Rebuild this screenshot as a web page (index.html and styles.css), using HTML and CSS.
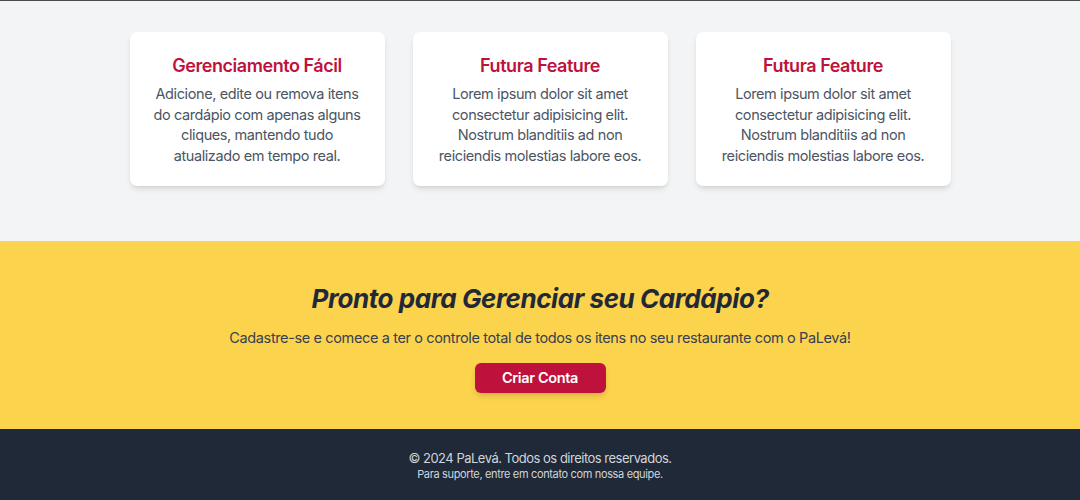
FILE: index.html
```html
<!DOCTYPE html>
<html lang="pt-BR">
<head>
<meta charset="utf-8">
<title>PaLevá</title>
<link rel="stylesheet" href="styles.css">
</head>
<body>
<section class="features">
  <div class="cards">
    <div class="card">
      <h3 class="card-title">Gerenciamento Fácil</h3>
      <p class="card-text">Adicione, edite ou remova itens do cardápio com apenas alguns cliques, mantendo tudo atualizado em tempo real.</p>
    </div>
    <div class="card">
      <h3 class="card-title">Futura Feature</h3>
      <p class="card-text">Lorem ipsum dolor sit amet consectetur adipisicing elit. Nostrum blanditiis ad non reiciendis molestias labore eos.</p>
    </div>
    <div class="card">
      <h3 class="card-title">Futura Feature</h3>
      <p class="card-text">Lorem ipsum dolor sit amet consectetur adipisicing elit. Nostrum blanditiis ad non reiciendis molestias labore eos.</p>
    </div>
  </div>
</section>
<section class="cta">
  <h2 class="cta-title">Pronto para Gerenciar seu Cardápio?</h2>
  <p class="cta-text">Cadastre-se e comece a ter o controle total de todos os itens no seu restaurante com o PaLevá!</p>
  <a class="cta-button" href="#">Criar Conta</a>
</section>
<footer class="footer">
  <p class="footer-main">© 2024 PaLevá. Todos os direitos reservados.</p>
  <p class="footer-sub">Para suporte, entre em contato com nossa equipe.</p>
</footer>
</body>
</html>
```
FILE: styles.css
```css
* { box-sizing: border-box; }
html, body { margin: 0; padding: 0; }
body {
  font-family: Inter, "Liberation Sans", sans-serif;
  background: #f3f4f6;
  border-top: 1px solid #4b4b4b;
}
.features {
  padding: 31px 0 55px;
}
.cards {
  display: flex;
  justify-content: center;
  gap: 28px;
}
.card {
  width: 255px;
  height: 154px;
  background: #fff;
  border-radius: 7px;
  box-shadow: 0 4px 6px -1px rgba(0,0,0,0.1), 0 2px 4px -2px rgba(0,0,0,0.1);
  padding: 22px 23px;
  text-align: center;
}
.card-title {
  margin: 0 0 6px;
  font-size: 18px;
  line-height: 24px;
  font-weight: 600;
  letter-spacing: -0.45px;
  color: #be123c;
}
.card-text {
  margin: 0;
  font-size: 14.5px;
  line-height: 20.6px;
  letter-spacing: -0.4px;
  color: #4b5563;
}
.cta {
  background: #fcd34d;
  text-align: center;
  padding: 41px 0 36px;
}
.cta-title {
  margin: 0;
  font-size: 26px;
  line-height: 34px;
  font-style: italic;
  font-weight: 700;
  letter-spacing: -0.43px;
  color: #1f2937;
}
.cta-text {
  margin: 12px 0 15px;
  font-size: 14.5px;
  line-height: 20px;
  letter-spacing: -0.37px;
  color: #374151;
}
.cta-button {
  display: inline-block;
  width: 131px;
  height: 30px;
  line-height: 30px;
  background: #be123c;
  color: #fff;
  font-weight: 600;
  font-size: 14.5px;
  letter-spacing: -0.36px;
  text-decoration: none;
  border-radius: 6px;
  box-shadow: 0 4px 6px -1px rgba(0,0,0,0.12), 0 2px 4px -2px rgba(0,0,0,0.1);
}
.footer {
  background: #1f2937;
  text-align: center;
  padding: 21px 0 20px;
  height: 71px;
}
.footer-main {
  margin: 0;
  font-size: 13px;
  line-height: 16px;
  letter-spacing: -0.5px;
  color: #d1d5db;
}
.footer-sub {
  margin: 1px 0 0;
  font-size: 11px;
  line-height: 14px;
  letter-spacing: -0.35px;
  color: #d1d5db;
}
```
